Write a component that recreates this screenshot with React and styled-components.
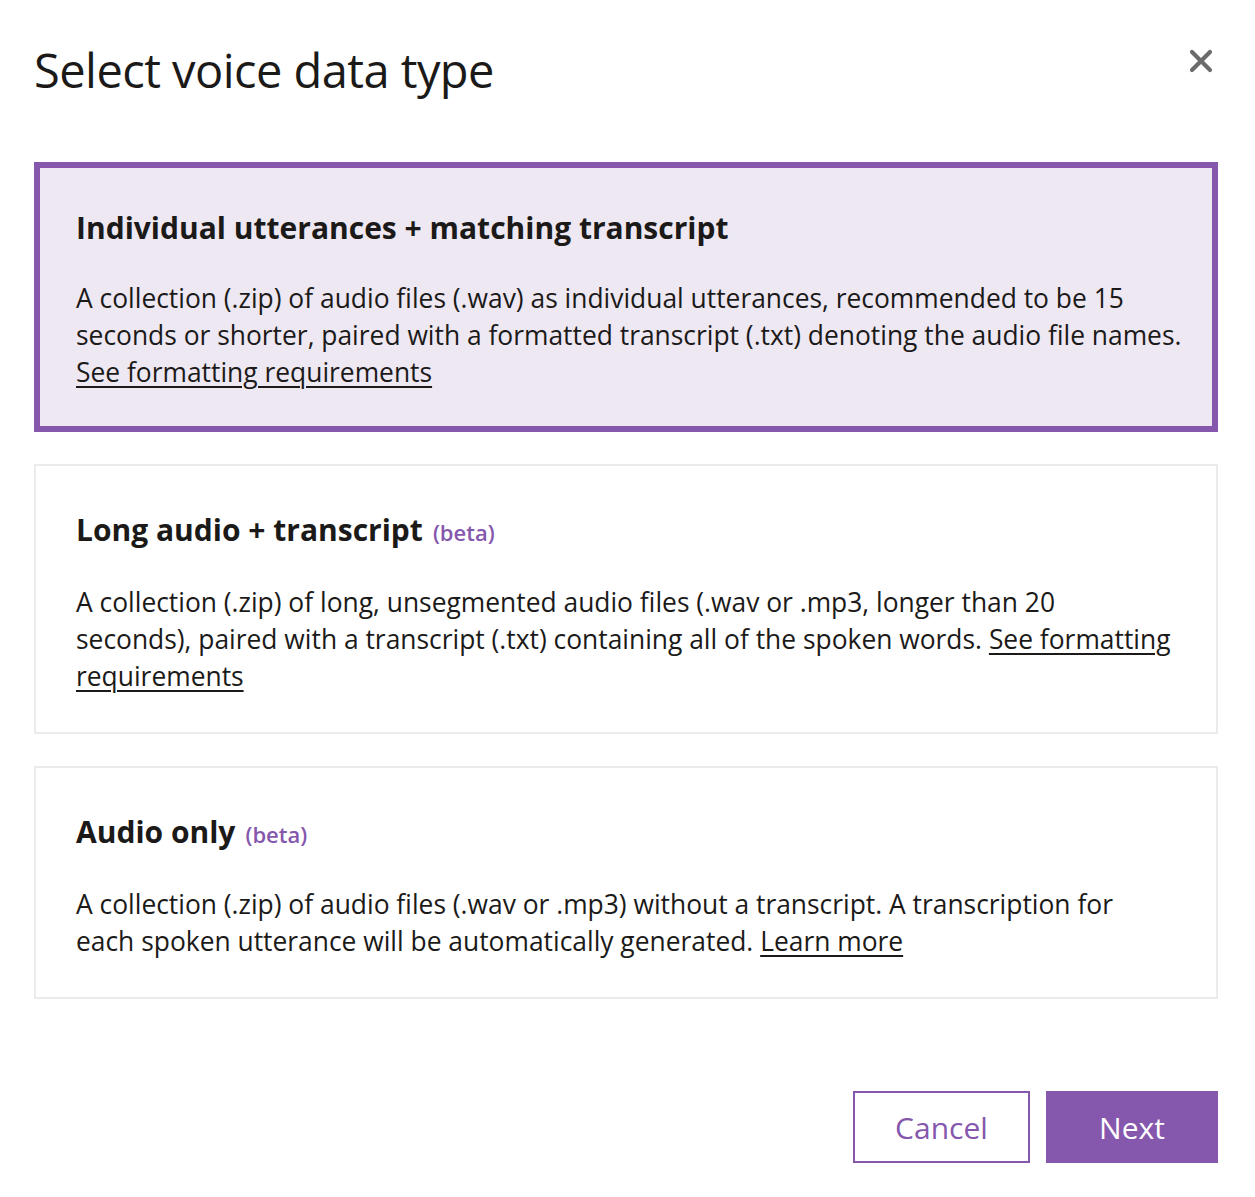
import React from "react";
import styled, { createGlobalStyle } from "styled-components";

const Global = createGlobalStyle`
  html, body { margin: 0; padding: 0; background: #ffffff; }
  body { font-family: "Open Sans", "Noto Sans", sans-serif; color: #1b1a19; }
  * { box-sizing: border-box; }
`;

const Dialog = styled.div`
  width: 1255px;
  padding: 0 37px 0 34px;
`;

const Header = styled.div`
  display: flex;
  align-items: center;
  justify-content: space-between;
  height: 162px;
  padding-bottom: 22px;
`;

const Title = styled.h1`
  margin: 0;
  font-size: 47px;
  font-weight: 400;
  letter-spacing: -0.55px;
  color: #1b1a19;
`;

const CloseButton = styled.button`
  border: none;
  background: transparent;
  padding: 0;
  width: 30px;
  height: 30px;
  display: flex;
  align-items: center;
  justify-content: center;
  margin-right: 2px;
  margin-bottom: 19px;
  cursor: pointer;
`;

const Cards = styled.div`
  display: flex;
  flex-direction: column;
  gap: 32px;
`;

const Card = styled.div`
  border: ${(p) => (p.$selected ? "6px solid #8557ad" : "2px solid #ebebeb")};
  background: ${(p) => (p.$selected ? "#eee8f3" : "#ffffff")};
  padding: ${(p) => (p.$selected ? "40px 26px 35px 36px" : "44px 30px 37px 40px")};
`;

const CardTitle = styled.div`
  font-size: 30px;
  font-weight: 700;
  line-height: 40px;
  letter-spacing: 0;
  color: #1b1a19;
  display: flex;
  align-items: baseline;
  gap: 10px;
`;

const Beta = styled.span`
  font-size: 22px;
  font-weight: 600;
  color: #8557ad;
`;

const CardBody = styled.p`
  margin: 32px 0 0;
  font-size: 26.4px;
  line-height: 37px;
  letter-spacing: 0;
  color: #1b1a19;
`;

const Link = styled.a`
  color: #1b1a19;
  text-decoration: underline;
  text-underline-offset: 4px;
  text-decoration-thickness: 2px;
`;

const Footer = styled.div`
  display: flex;
  justify-content: flex-end;
  gap: 16px;
  margin-top: 92px;
`;

const Button = styled.button`
  height: 72px;
  font-family: "Open Sans", "Noto Sans", sans-serif;
  font-size: 30px;
  font-weight: 400;
  border: 2px solid #8557ad;
  background: ${(p) => (p.$primary ? "#8557ad" : "#ffffff")};
  color: ${(p) => (p.$primary ? "#ffffff" : "#8557ad")};
  width: ${(p) => (p.$primary ? "172px" : "177px")};
  padding: 0;
  cursor: pointer;
`;

export default function App() {
  return (
    <Dialog>
      <Global />
      <Header>
        <Title>Select voice data type</Title>
        <CloseButton aria-label="Close">
          <svg width="24" height="24" viewBox="0 0 24 24">
            <path d="M3 3 L21 21 M21 3 L3 21" stroke="#6b6b6b" strokeWidth="4.2" strokeLinecap="round" />
          </svg>
        </CloseButton>
      </Header>
      <Cards>
        <Card $selected>
          <CardTitle>Individual utterances + matching transcript</CardTitle>
          <CardBody>
            A collection (.zip) of audio files (.wav) as individual utterances, recommended to be 15
            <br />
            seconds or shorter, paired with a formatted transcript (.txt) denoting the audio file names.
            <br />
            <Link href="#">See formatting requirements</Link>
          </CardBody>
        </Card>
        <Card>
          <CardTitle>
            Long audio + transcript <Beta>(beta)</Beta>
          </CardTitle>
          <CardBody>
            A collection (.zip) of long, unsegmented audio files (.wav or .mp3, longer than 20
            <br />
            seconds), paired with a transcript (.txt) containing all of the spoken words.{" "}
            <Link href="#">
              See formatting
              <br />
              requirements
            </Link>
          </CardBody>
        </Card>
        <Card>
          <CardTitle>
            Audio only <Beta>(beta)</Beta>
          </CardTitle>
          <CardBody>
            A collection (.zip) of audio files (.wav or .mp3) without a transcript. A transcription for
            <br />
            each spoken utterance will be automatically generated. <Link href="#">Learn more</Link>
          </CardBody>
        </Card>
      </Cards>
      <Footer>
        <Button>Cancel</Button>
        <Button $primary>Next</Button>
      </Footer>
    </Dialog>
  );
}
